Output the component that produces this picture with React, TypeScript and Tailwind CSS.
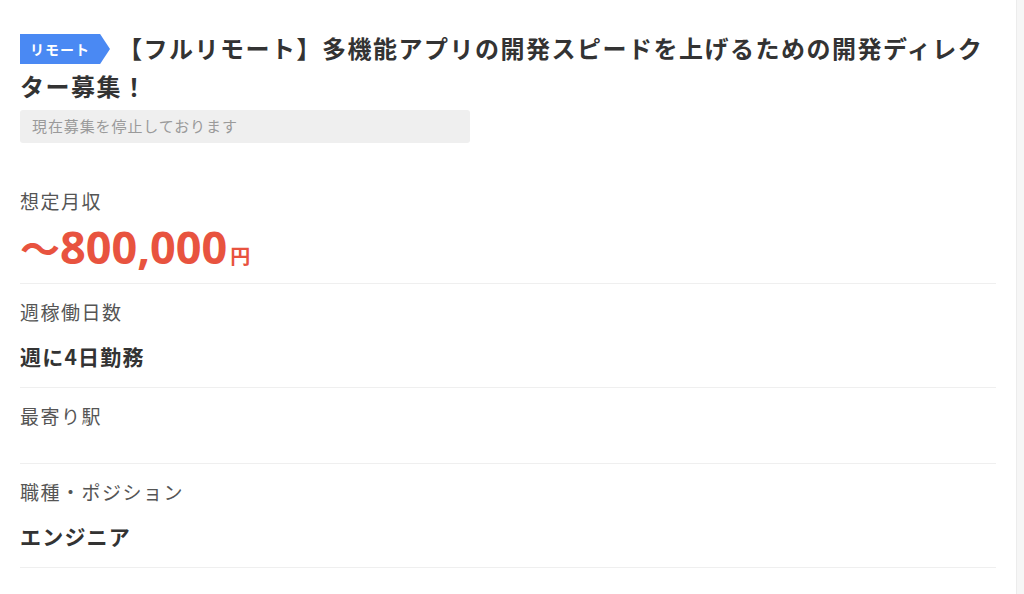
import React from "react";

interface InfoRow {
  label: string;
  value: string;
}

const rows: InfoRow[] = [
  { label: "週稼働日数", value: "週に4日勤務" },
  { label: "最寄り駅", value: "" },
  { label: "職種・ポジション", value: "エンジニア" },
];

const jp = "font-['Noto_Sans_CJK_JP','Noto_Sans',sans-serif]";

export default function App() {
  return (
    <div className={`flex min-h-[594px] w-full bg-white ${jp}`}>
      <div className="flex-1 px-5 pt-[29px]">
        <h1 className="text-[24px] leading-[38px] font-bold tracking-[1.5px] text-[#333333]">
          <span className="mr-[8px] inline-flex h-[30px] w-[90px] items-center bg-[#4a89f3] pl-[10px] align-[3px] text-[14px] leading-none font-bold tracking-[1px] text-white [clip-path:polygon(0_0,89%_0,100%_50%,89%_100%,0_100%)]">
            リモート
          </span>
          【フルリモート】多機能アプリの開発スピードを上げるための開発ディレクター募集！
        </h1>

        <div className="mt-[5px] flex h-[33px] w-[450px] items-center rounded-[3px] bg-[#efefef] pl-3 text-[15px] tracking-[0.9px] text-[#9a9a9a]">
          現在募集を停止しております
        </div>

        <div className="mt-[47px] flex flex-col border-b border-[#efefef] pb-[15px]">
          <div className="text-[19px] leading-[22px] tracking-[1.5px] text-[#555555]">
            想定月収
          </div>
          <div className="mt-[12px] flex h-[44px] items-baseline font-bold text-[#e8533f]">
            <span className="text-[40px] leading-none">〜</span>
            <span className="font-['Open_Sans',sans-serif] text-[45px] leading-none">800,000</span>
            <span className="ml-[3px] text-[20px] leading-none">円</span>
          </div>
        </div>

        {rows.map((row) => (
          <div
            key={row.label}
            className="flex flex-col border-b border-[#efefef] pt-[17px] pb-[17px]"
          >
            <div className="text-[19px] leading-[22px] tracking-[1.5px] text-[#555555]">
              {row.label}
            </div>
            <div className="mt-[19px] text-[21px] leading-[28px] font-bold tracking-[1.2px] text-[#333333]">
              {row.value}
            </div>
          </div>
        ))}
      </div>
      <div className="w-[8px] shrink-0 border-l border-[#ececec] bg-[#f6f6f6]" />
    </div>
  );
}
